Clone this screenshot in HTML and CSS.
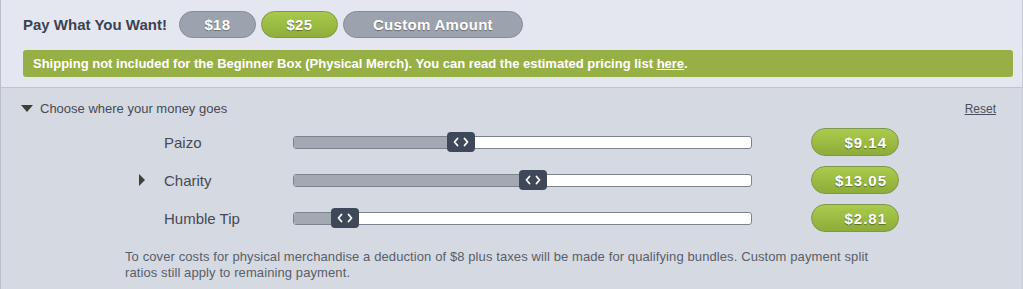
FILE: index.html
```html
<!DOCTYPE html>
<html>
<head>
<meta charset="utf-8">
<link rel="stylesheet" href="styles.css">
</head>
<body>
<div class="panel">
  <div class="top">
    <div class="pwyw">
      <span class="pwyw-label">Pay What You Want!</span>
      <button class="pill pill-gray pill-sm">$18</button>
      <button class="pill pill-green pill-sm">$25</button>
      <button class="pill pill-gray pill-lg">Custom Amount</button>
    </div>
    <div class="notice"><span>Shipping not included for the Beginner Box (Physical Merch). You can read the estimated pricing list <a href="#">here</a>.</span></div>
  </div>
  <div class="split">
    <div class="split-head">
      <span class="toggle"><span class="tri-down"></span>Choose where your money goes</span>
      <a class="reset" href="#">Reset</a>
    </div>
    <div class="rows">
      <div class="row">
        <div class="name"><span class="arrow"></span>Paizo</div>
        <div class="track">
          <div class="fill" style="width:168px"></div>
          <div class="handle" style="left:154px"><svg width="28" height="20" viewBox="0 0 28 20"><path d="M10.5 6.5 7.5 10l3 3.5M17.5 6.5l3 3.5-3 3.5" fill="none" stroke="#fff" stroke-width="1.8" stroke-linecap="round" stroke-linejoin="round"/></svg></div>
        </div>
        <div class="amount">$9.14</div>
      </div>
      <div class="row">
        <div class="name"><span class="arrow arrow-on"></span>Charity</div>
        <div class="track">
          <div class="fill" style="width:240px"></div>
          <div class="handle" style="left:226px"><svg width="28" height="20" viewBox="0 0 28 20"><path d="M10.5 6.5 7.5 10l3 3.5M17.5 6.5l3 3.5-3 3.5" fill="none" stroke="#fff" stroke-width="1.8" stroke-linecap="round" stroke-linejoin="round"/></svg></div>
        </div>
        <div class="amount">$13.05</div>
      </div>
      <div class="row">
        <div class="name"><span class="arrow"></span>Humble Tip</div>
        <div class="track">
          <div class="fill" style="width:52px"></div>
          <div class="handle" style="left:38px"><svg width="28" height="20" viewBox="0 0 28 20"><path d="M10.5 6.5 7.5 10l3 3.5M17.5 6.5l3 3.5-3 3.5" fill="none" stroke="#fff" stroke-width="1.8" stroke-linecap="round" stroke-linejoin="round"/></svg></div>
        </div>
        <div class="amount">$2.81</div>
      </div>
    </div>
    <p class="note">To cover costs for physical merchandise a deduction of $8 plus taxes will be made for qualifying bundles. Custom payment split ratios still apply to remaining payment.</p>
  </div>
</div>
</body>
</html>
```

FILE: styles.css
```css
* { box-sizing: border-box; }
html, body { margin: 0; padding: 0; }
body {
  font-family: "Liberation Sans", Arial, sans-serif;
  background: #d5d9e1;
  width: 1023px;
  height: 289px;
  overflow: hidden;
}
.panel {
  border-left: 1px solid #b8becb;
  border-right: 1px solid #c9ced8;
  height: 289px;
}
.top {
  background: #e4e7ef;
  padding: 11px 9px 10px 22px;
  border-bottom: 1px solid #bfc4ce;
}
.pwyw {
  display: flex;
  align-items: center;
  gap: 5px;
  height: 27px;
}
.pwyw-label {
  font-size: 15px;
  font-weight: bold;
  color: #3d4250;
  margin-right: 7px;
}
.pill {
  height: 27px;
  border-radius: 14px;
  font-family: inherit;
  font-size: 15px;
  font-weight: bold;
  color: #fff;
  text-shadow: 0 1px 1px rgba(0,0,0,0.35);
  padding: 0;
  display: flex;
  align-items: center;
  justify-content: center;
  letter-spacing: 0.3px;
}
.pill-gray {
  background: #9da3ae;
  border: 1px solid #858b97;
}
.pill-green {
  background: linear-gradient(#a9c94b, #8fae3a);
  border: 1px solid #7e974a;
}
.pill-sm { width: 77px; }
.pill-lg { width: 180px; }
.notice {
  margin-top: 12px;
  background: #97b046;
  border-radius: 3px;
  height: 27px;
  padding-left: 10px;
  display: flex;
  align-items: center;
  color: #fff;
  font-size: 13px;
  font-weight: bold;
}
.notice a { color: #fff; }
.split {
  padding: 0 26px 0 20px;
}
.split-head {
  height: 35px;
  display: flex;
  align-items: center;
  justify-content: space-between;
  padding-top: 6px;
}
.toggle {
  display: flex;
  align-items: center;
  font-size: 13px;
  color: #454a55;
}
.tri-down {
  width: 0; height: 0;
  border-left: 6px solid transparent;
  border-right: 6px solid transparent;
  border-top: 7px solid #3f3f3a;
  margin-right: 7px;
}
.reset {
  font-size: 12px;
  color: #4a4f5a;
}
.rows {
  display: flex;
  flex-direction: column;
}
.row {
  display: grid;
  grid-template-columns: 272px 459px 59px 88px;
  align-items: center;
  height: 38px;
}
.name {
  display: flex;
  align-items: center;
  padding-left: 117px;
  font-size: 15px;
  color: #454a55;
}
.arrow {
  width: 26px;
  display: flex;
}
.arrow-on::before {
  content: "";
  margin-left: 1px;
  border-top: 6px solid transparent;
  border-bottom: 6px solid transparent;
  border-left: 6px solid #3f3f3a;
}
.track {
  position: relative;
  height: 13px;
  background: #fff;
  border: 1px solid #7c8290;
  border-radius: 3px;
}
.fill {
  height: 100%;
  background: #a3a9b3;
  border-radius: 2px 0 0 2px;
}
.handle {
  position: absolute;
  top: -5px;
  width: 28px;
  height: 20px;
  margin-left: -1px;
  background: #3f4858;
  border-radius: 4px;
  display: flex;
}
.amount {
  grid-column: 4;
  height: 28px;
  border-radius: 14px;
  background: linear-gradient(#aacb4c, #8dac39);
  border: 1px solid #7f9650;
  color: #fff;
  font-size: 15px;
  font-weight: bold;
  text-shadow: 0 1px 1px rgba(0,0,0,0.4);
  display: flex;
  align-items: center;
  justify-content: flex-end;
  padding-right: 11px;
  letter-spacing: 1px;
}
.note {
  margin: 12px 0 0 104px;
  width: 760px;
  font-size: 13px;
  line-height: 16px;
  letter-spacing: 0.1px;
  color: #595e69;
}
```
